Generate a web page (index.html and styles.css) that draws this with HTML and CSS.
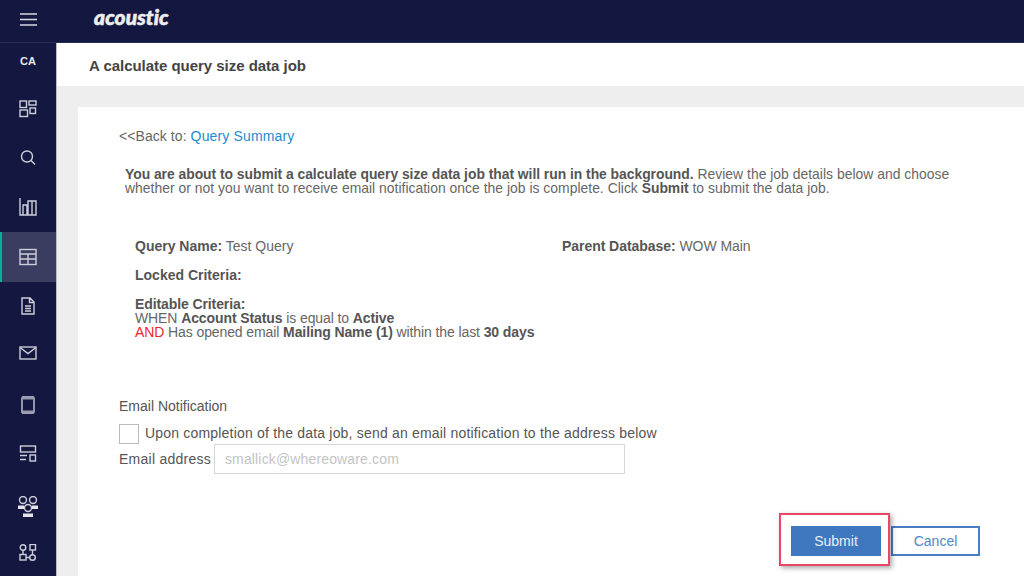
FILE: index.html
```html
<!DOCTYPE html>
<html lang="en">
<head>
<meta charset="utf-8">
<title>A calculate query size data job</title>
<link rel="stylesheet" href="styles.css">
</head>
<body>
<header class="topbar">
  <div class="burger"><svg width="17" height="13" viewBox="0 0 17 13"><path d="M0 1h17M0 6.500h17M0 12h17" stroke="#d6d7e0" stroke-width="1.300" fill="none"/></svg></div>
  <div class="logo">acoustic</div>
</header>
<div class="shell">
  <nav class="sidebar">
    <div class="nav-ca">CA</div>
    <div class="nav-item"><svg class="ico" viewBox="0 0 18 18"><rect x="1" y="1" width="6.500" height="6.500"/><rect x="10" y="1" width="7" height="4"/><rect x="1" y="10" width="7.500" height="6.500"/><rect x="11" y="8" width="5.500" height="5.500"/></svg></div>
    <div class="nav-item"><svg class="ico" viewBox="0 0 18 18"><circle cx="8" cy="7.500" r="5.500"/><path d="M12 11.500l4 4"/></svg></div>
    <div class="nav-item"><svg class="ico" viewBox="0 0 18 18"><path d="M1 0V17H17M4 17V7h4v10M9 17V3h4v14M13 17h4V3h-4"/></svg></div>
    <div class="nav-item active"><svg class="ico" viewBox="0 0 18 18"><rect x="1" y="1.500" width="16" height="15"/><path d="M1 6h16M1 11h16M9 6v10.500"/></svg></div>
    <div class="nav-item"><svg class="ico" viewBox="0 0 18 18"><path d="M3 1h8l4 4v12H3zM10.500 1v4.500H15M6 9h6M6 11.500h6M6 14h6"/></svg></div>
    <div class="nav-item"><svg class="ico ico-up" viewBox="0 0 18 18"><rect x="1" y="3" width="16" height="12"/><path d="M1 3.500l8 6 8-6"/></svg></div>
    <div class="nav-item"><svg class="ico" viewBox="0 0 18 18"><rect x="3" y="1" width="12" height="16" rx="1"/><path class="band" d="M3 2.500h12M3 15.500h12"/></svg></div>
    <div class="nav-item"><svg class="ico" viewBox="0 0 18 18"><rect x="1.500" y="1" width="15" height="6"/><path d="M1 10.500h7M1 14.500h6"/><rect x="11" y="10" width="5.500" height="6"/></svg></div>
    <div class="nav-item"><svg class="ico ico-lg ico-down" viewBox="0 0 21 21"><circle cx="5" cy="4" r="3.500"/><circle cx="15" cy="4" r="3.500"/><circle cx="10" cy="12" r="3.500"/><path class="solid" d="M0 9.500h6V13H0zM14 9.500h6V13h-6zM5 17.500h10V21H5z"/></svg></div>
    <div class="nav-item"><svg class="ico" viewBox="0 0 18 18"><circle cx="4" cy="3.500" r="2.800"/><rect x="11" y="0.500" width="5.500" height="5.500"/><rect x="1" y="10.500" width="6" height="5.500"/><circle cx="13.500" cy="13.500" r="2.800"/><path d="M4 6.300v4.200M13.500 6v4.700M7 13.500h3.700"/></svg></div>
  </nav>
  <main class="main">
    <div class="title-bar"><h1 class="title">A calculate query size data job</h1></div>
    <section class="card">
      <p class="back">&lt;&lt;Back to: <a class="link">Query Summary</a></p>
      <p class="intro"><b>You are about to submit a calculate query size data job that will run in the background.</b> Review the job details below and choose whether or not you want to receive email notification once the job is complete. Click <b>Submit</b> to submit the data job.</p>
      <div class="details">
        <div class="details-left">
          <p class="detail"><b>Query Name:</b> Test Query</p>
          <p class="detail"><b>Locked Criteria:</b></p>
          <p class="detail detail-tight"><b>Editable Criteria:</b><br>WHEN <b>Account Status</b> is equal to <b>Active</b><br><span class="and">AND</span> Has opened email <b>Mailing Name (1)</b> within the last <b>30 days</b></p>
        </div>
        <p class="detail details-right"><b>Parent Database:</b> WOW Main</p>
      </div>
      <div class="notify">
        <div class="notify-title">Email Notification</div>
        <label class="check-row"><span class="checkbox"></span><span class="check-text">Upon completion of the data job, send an email notification to the address below</span></label>
        <div class="email-row"><span class="email-label">Email address</span><span class="email-input">smallick@whereoware.com</span></div>
      </div>
      <div class="actions">
        <button class="btn btn-primary">Submit</button>
        <button class="btn btn-secondary">Cancel</button>
        <span class="highlight"></span>
      </div>
    </section>
  </main>
</div>
</body>
</html>
```
FILE: styles.css
```css
* { box-sizing: border-box; }
html, body { margin: 0; height: 576px; overflow: hidden; }
body { font-family: "Liberation Sans", Arial, sans-serif; font-size: 14px; color: #555; background: #eee; }
p { margin: 0; }
.topbar { height: 43px; background: #14173f; display: flex; align-items: center; border-bottom: 1px solid #2a2d52; }
.burger { width: 57px; display: flex; justify-content: center; margin-top: -4px; }
.burger svg { display: block; }
.logo { margin-left: 37px; margin-top: -9px; font-family: Lato, sans-serif; font-weight: 900; font-style: italic; font-size: 21px; letter-spacing: 0.100px; color: #eceded; -webkit-text-stroke: 0.600px #eceded; }
.shell { display: flex; height: 533px; }
.sidebar { width: 57px; background: #14173f; flex: none; border-right: 1px solid #b9bacb; display: flex; flex-direction: column; overflow: hidden; }
.nav-item { height: 49.400px; flex: none; display: flex; align-items: center; justify-content: center; }
.nav-ca { height: 36px; margin-bottom: 5px; flex: none; display: flex; align-items: center; justify-content: center; font-size: 11px; font-weight: 700; color: #e8e8ee; }
.active { background: #3a3d5f; border-left: 2px solid #00b398; padding-right: 2px; }
.ico { width: 18px; height: 18px; fill: none; stroke: #cdced9; stroke-width: 1.400; display: block; }
.ico-lg { width: 21px; height: 21px; }
.ico-up { margin-bottom: 6px; }
.ico-down { margin-top: 6px; }
.band { stroke: #9698ad; stroke-width: 2px; }
.solid { fill: #e4e4ea; stroke: none; }
.main { flex: 1; min-width: 0; display: flex; flex-direction: column; }
.title-bar { height: 43px; background: #fff; flex: none; display: flex; align-items: center; padding: 2px 0 0 32px; }
.title { margin: 0; font-size: 15px; font-weight: 700; letter-spacing: -0.030px; color: #444; }
.card { margin: 21px 0 0 21px; background: #fff; flex: 1; padding: 21px 41px 0; position: relative; }
.back { font-size: 14px; color: #666; letter-spacing: 0.070px; line-height: 16px; }
.link { color: #1f8ad0; letter-spacing: 0.150px; }
.intro { margin: 23px 30px 0 6px; font-size: 13.900px; line-height: 14px; letter-spacing: 0.020px; color: #666; }
.intro b { color: #555; letter-spacing: -0.035px; }
.details { display: flex; margin: 44px 0 0 16px; }
.details-left { width: 427px; }
.detail { margin-bottom: 15px; line-height: 14px; color: #666; }
.detail b { color: #555; }
.detail-tight { letter-spacing: -0.100px; }
.details-right { letter-spacing: -0.050px; }
.and { color: #f0262a; }
.notify { margin-top: 44px; }
.notify-title { line-height: 16px; color: #555; }
.check-row { display: flex; align-items: flex-start; gap: 6px; margin-top: 9px; height: 21px; color: #555; }
.check-text { line-height: 21px; letter-spacing: 0.190px; }
.checkbox { width: 20px; height: 20px; margin-top: 1px; border: 1px solid #bbb; background: #fff; flex: none; }
.email-row { display: flex; align-items: center; gap: 3px; color: #555; }
.email-label { letter-spacing: 0.250px; }
.email-input { width: 411px; height: 30px; border: 1px solid #d8d8d8; padding-left: 10px; display: flex; align-items: center; color: #c4c4c4; font-size: 14px; letter-spacing: 0.150px; }
.actions { position: absolute; left: 713px; top: 419px; display: flex; gap: 10px; }
.btn { width: 90px; height: 30px; font: inherit; font-size: 14px; padding: 0; }
.btn-primary { background: #4078c0; color: #e8eef7; border: 1px solid #4078c0; }
.btn-secondary { width: 89px; background: #fff; color: #5585c8; border: 2px solid #4a7dc4; }
.highlight { position: absolute; left: -12px; top: -13px; width: 111px; height: 53px; border: 2px solid #ea4668; box-shadow: 2px 2px 5px rgba(0,0,0,0.350); }
```
